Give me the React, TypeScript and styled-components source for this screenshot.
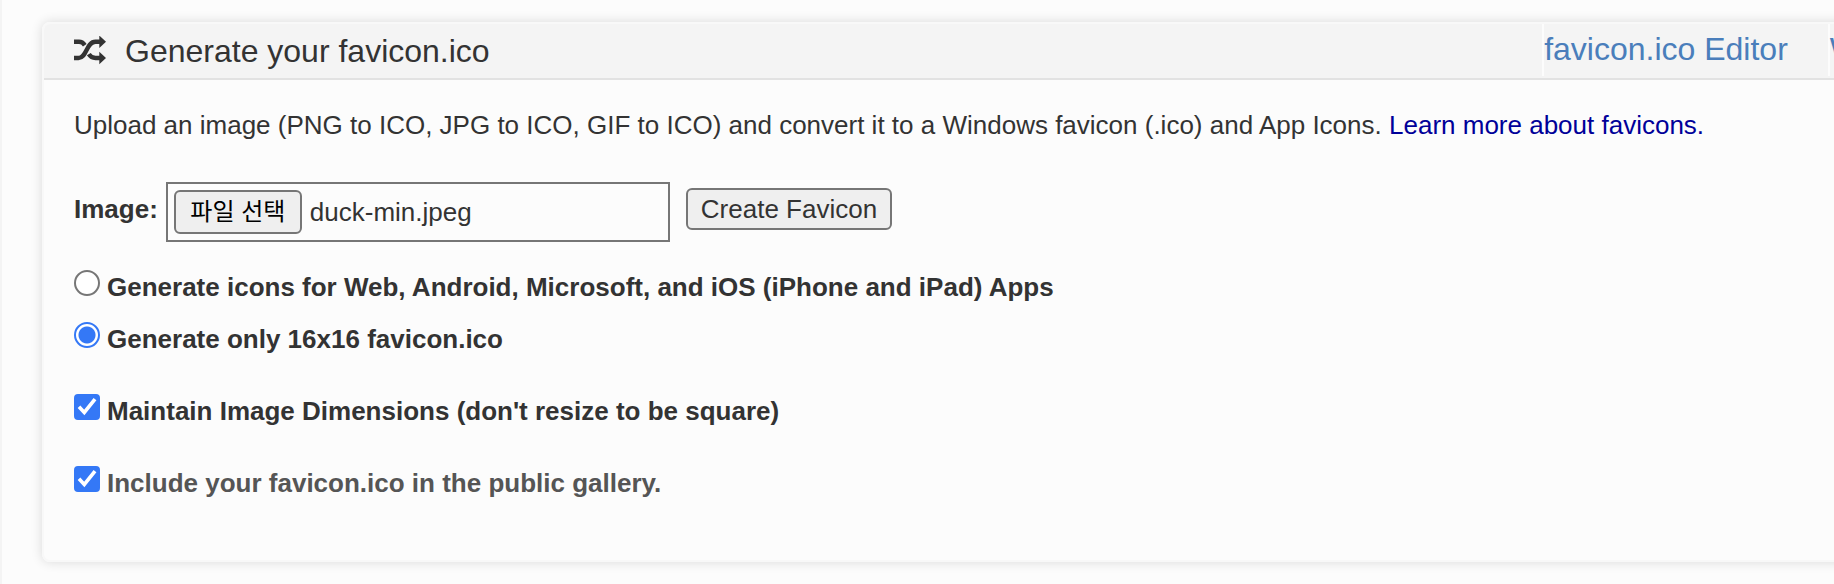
import React, { useId, useRef, useState } from "react";
import styled, { createGlobalStyle } from "styled-components";

const GlobalStyle = createGlobalStyle`
  *, *::before, *::after { box-sizing: border-box; }
  body {
    margin: 0;
    background: #fcfcfc;
    color: #333;
    font: 26px/36px "Liberation Sans", "Noto Sans CJK KR", sans-serif;
  }
`;

const Page = styled.main`
  overflow: hidden;
  min-height: 100vh;
  border-left: 2px solid #f4f4f4;
  padding: 22px 0 20px 40px;
`;

const Card = styled.section`
  margin-right: -40px;
  border: 2px solid #f8f8f8;
  border-radius: 8px;
  box-shadow: 0 0 12px rgba(0, 0, 0, 0.14);
`;

const CardHeader = styled.header`
  display: flex;
  align-items: flex-start;
  justify-content: space-between;
  background: #f4f4f4;
  border-bottom: 2px solid #e2e2e2;
  border-radius: 6px 6px 0 0;
  height: 56px;
  padding-left: 30px;
`;

const Title = styled.h1`
  display: flex;
  align-items: center;
  gap: 19px;
  margin: 0;
  font-size: 32px;
  font-weight: 400;
  line-height: 54px;
`;

const ShuffleGlyph = styled.svg`
  width: 32px;
  height: 30px;
`;

const HeaderLinks = styled.nav`
  display: flex;
`;

const HeaderLink = styled.a`
  height: 52px;
  border-left: 2px solid #fcfcfc;
  padding-right: 40px;
  color: #4a7ebb;
  font-size: 32px;
  line-height: 50px;
  text-decoration: none;
  white-space: nowrap;

  &:last-child { padding-right: 12px; }
`;

const CardBody = styled.div`
  padding: 27px 30px 60px;
`;

const Intro = styled.p`
  margin: 0 0 39px;
`;

const TextLink = styled.a`
  color: #000099;
  text-decoration: none;
`;

const UploadRow = styled.div`
  display: flex;
  align-items: center;
  flex-wrap: wrap;
  margin-bottom: 28px;
`;

const FieldLabel = styled.label`
  margin: 0 8px 6px 0;
  font-weight: 700;
`;

const FileField = styled.div`
  display: flex;
  align-items: center;
  gap: 8px;
  width: 504px;
  height: 60px;
  margin-right: 16px;
  border: 2px solid #767676;
  padding: 0 6px;
`;

const HiddenFileInput = styled.input`
  position: absolute;
  width: 1px;
  height: 1px;
  opacity: 0;
`;

const Button = styled.button`
  height: 42px;
  border: 2px solid #767676;
  border-radius: 6px;
  padding: 0 13px;
  background: #efefef;
  color: #333;
  font: inherit;
  line-height: 36px;
`;

const PickButton = styled(Button)`
  width: 128px;
  height: 44px;
  padding: 0;
  color: #000;
  font-size: 24px;
`;

const SubmitButton = styled(Button)`
  margin-bottom: 6px;
`;

const Options = styled.div<{ $gap: number }>`
  display: grid;
  gap: ${(p) => p.$gap}px;

  & + & { margin-top: 38px; }
`;

const OptionLabel = styled.label<{ $muted?: boolean }>`
  display: flex;
  align-items: flex-start;
  gap: 7px;
  color: ${(p) => (p.$muted ? "#555" : "#333")};
  font-weight: 700;
  line-height: 34px;
`;

const Radio = styled.input`
  appearance: none;
  flex: none;
  width: 26px;
  height: 26px;
  margin: 0;
  border: 2px solid #767676;
  border-radius: 50%;
  background: #fff;

  &:checked {
    border-color: #3478f6;
    background: radial-gradient(circle, #3478f6 8px, #fff 9px);
  }
`;

const CheckBoxFrame = styled.span`
  display: grid;
  flex: none;

  & > * { grid-area: 1 / 1; }
`;

const CheckBox = styled.input`
  appearance: none;
  width: 26px;
  height: 26px;
  margin: 0;
  border: 2px solid #767676;
  border-radius: 4px;
  background: #fff;

  &:checked {
    border-color: #3478f6;
    background: #3478f6;
  }

  & + svg { visibility: hidden; }
  &:checked + svg { visibility: visible; }
`;

const Tick = styled.svg`
  width: 26px;
  height: 26px;
  pointer-events: none;
`;

function ShuffleIcon() {
  return (
    <ShuffleGlyph viewBox="0 0 32 30" aria-hidden="true">
      <g fill="none" stroke="#333" strokeWidth="4.4">
        <path d="M0 5.800h5c2.600 0 4.200 1 5.800 3.400" />
        <path d="M0 22h4.500c8.500 0 7.500-16.200 17-16.200h4.500" />
        <path d="M14.800 18.200c1.700 2.800 3.700 3.800 6.700 3.800h4.500" />
      </g>
      <path fill="#333" d="M25.300-.500l6.700 6.300-6.700 6.300zM25.300 15.700l6.700 6.300-6.700 6.300z" />
    </ShuffleGlyph>
  );
}

function CheckOption({ label, muted }: { label: string; muted?: boolean }) {
  return (
    <OptionLabel $muted={muted}>
      <CheckBoxFrame>
        <CheckBox type="checkbox" defaultChecked />
        <Tick viewBox="0 0 26 26" aria-hidden="true">
          <path d="M5 12.800l5.300 5.700L21 5.200" fill="none" stroke="#fff" strokeWidth="3.600" />
        </Tick>
      </CheckBoxFrame>
      {label}
    </OptionLabel>
  );
}

export default function App() {
  const fileId = useId();
  const fileRef = useRef<HTMLInputElement>(null);
  const [fileName, setFileName] = useState("duck-min.jpeg");

  return (
    <>
      <GlobalStyle />
      <Page>
        <Card>
          <CardHeader>
            <Title>
              <ShuffleIcon />
              Generate your favicon.ico
            </Title>
            <HeaderLinks>
              <HeaderLink href="#editor">favicon.ico Editor</HeaderLink>
              <HeaderLink href="#more">W</HeaderLink>
            </HeaderLinks>
          </CardHeader>
          <CardBody>
            <Intro>
              Upload an image (PNG to ICO, JPG to ICO, GIF to ICO) and convert it to a Windows
              favicon (.ico) and App Icons.{" "}
              <TextLink href="#learn">Learn more about favicons.</TextLink>
            </Intro>
            <form onSubmit={(e) => e.preventDefault()}>
              <UploadRow>
                <FieldLabel htmlFor={fileId}>Image:</FieldLabel>
                <FileField>
                  <HiddenFileInput
                    id={fileId}
                    ref={fileRef}
                    type="file"
                    tabIndex={-1}
                    accept="image/*"
                    onChange={(e) => setFileName(e.target.files?.[0]?.name ?? "")}
                  />
                  <PickButton type="button" onClick={() => fileRef.current?.click()}>
                    파일 선택
                  </PickButton>
                  <span>{fileName}</span>
                </FileField>
                <SubmitButton type="submit">Create Favicon</SubmitButton>
              </UploadRow>
              <Options $gap={18}>
                <OptionLabel>
                  <Radio type="radio" name="output" value="all" />
                  Generate icons for Web, Android, Microsoft, and iOS (iPhone and iPad) Apps
                </OptionLabel>
                <OptionLabel>
                  <Radio type="radio" name="output" value="single" defaultChecked />
                  Generate only 16x16 favicon.ico
                </OptionLabel>
              </Options>
              <Options $gap={38}>
                <CheckOption label="Maintain Image Dimensions (don't resize to be square)" />
                <CheckOption label="Include your favicon.ico in the public gallery." muted />
              </Options>
            </form>
          </CardBody>
        </Card>
      </Page>
    </>
  );
}
